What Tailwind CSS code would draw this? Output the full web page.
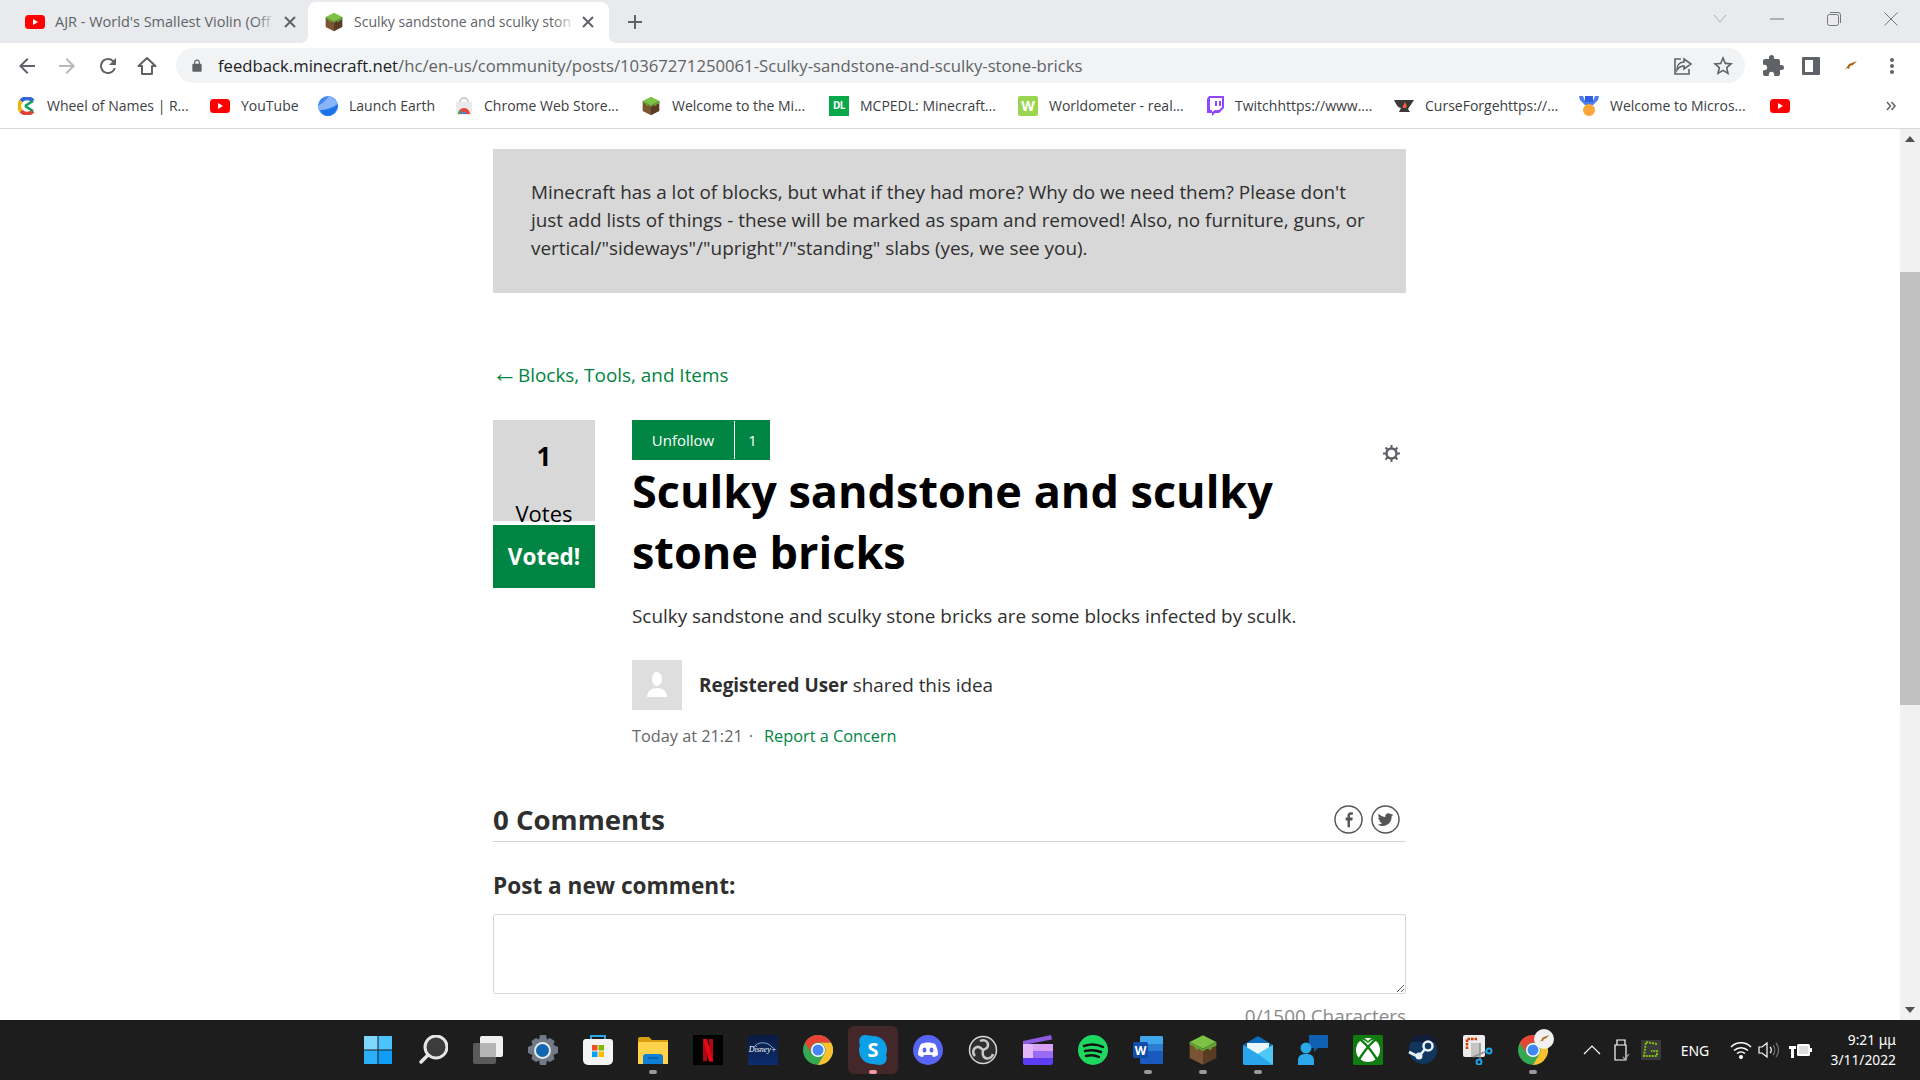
<!DOCTYPE html>
<html lang="en">
<head>
<meta charset="UTF-8">
<meta name="viewport" content="width=device-width, initial-scale=1.0">
<title>Sculky sandstone and sculky stone bricks</title>
<script src="https://cdn.jsdelivr.net/npm/@tailwindcss/browser@4"></script>
</head>
<body class="h-screen w-screen overflow-hidden bg-white flex flex-col font-['Open_Sans',sans-serif] text-[#2f2f2f]">

<!-- shared icons -->
<svg class="hidden">
  <symbol id="yt" viewBox="0 0 20 14"><rect width="20" height="14" rx="3.5" fill="#f00"/><path d="M8 4l5 3-5 3z" fill="#fff"/></symbol>
  <symbol id="grass" viewBox="0 0 24 24"><path d="M12 1l10 5-10 5L2 6z" fill="#7cc344"/><path d="M2 6l10 5v12L2 18z" fill="#7a5433"/><path d="M22 6l-10 5v12l10-5z" fill="#5a3c24"/><path d="M2 6l10 5 10-5v3l-3 1-1 2-3-1-3 2-3-2-2 1-2-3-3-1z" fill="#62a336"/></symbol>
  <symbol id="chrome" viewBox="0 0 24 24"><circle cx="12" cy="12" r="12" fill="#34a853"/><path d="M12 6h10.4A12 12 0 0 1 12 24l5.2-9A6 6 0 0 0 12 6z" fill="#fbc02d"/><path d="M12 0a12 12 0 0 1 10.4 6H12a6 6 0 0 0-5.2 9L1.6 6A12 12 0 0 1 12 0z" fill="#ea4335"/><circle cx="12" cy="12" r="5.6" fill="#fff"/><circle cx="12" cy="12" r="4.4" fill="#4285f4"/></symbol>
  <symbol id="gear" viewBox="0 0 30 30"><path d="M12 0h6l1 4.500 3-1.500 4.500 3-1 4 4.500 2v6l-4.500 2 1 4-4.500 3-3-1.500-1 4.500h-6l-1-4.500-3 1.500-4.500-3 1-4L0 18v-6l4.500-2-1-4L8 3l3 1.500z"/></symbol>
</svg>

<!-- tab strip -->
<div class="h-[43px] bg-[#e8eaed] flex items-end pl-4 shrink-0 text-[14px]">
  <div class="relative w-[292px] h-[41px] pb-[2px] flex items-center pl-[9px] pr-[11px] gap-[10px] text-[#5f6368]">
    <svg class="w-5 h-[14px] shrink-0"><use href="#yt"/></svg>
    <span class="flex-1 min-w-0 whitespace-nowrap text-[14.5px]">AJR - World's Smallest Violin (Off</span>
    <span class="absolute right-[32px] top-0 h-full w-5 bg-gradient-to-r from-transparent to-[#e8eaed]"></span>
    <svg class="relative w-[14px] h-[14px] shrink-0" viewBox="0 0 14 14" fill="none" stroke="#5f6368" stroke-width="2"><path d="M2 2l10 10M12 2L2 12"/></svg>
  </div>
  <div class="relative w-[301px] h-[41px] pb-[2px] bg-white rounded-t-lg flex items-center pl-[16px] pr-[14px] gap-[10px] text-[#5f6368]">
    <span class="absolute -left-2 bottom-0 w-2 h-2 bg-[radial-gradient(circle_at_0_0,transparent_8px,white_8px)]"></span>
    <span class="absolute -right-2 bottom-0 w-2 h-2 bg-[radial-gradient(circle_at_100%_0,transparent_8px,white_8px)]"></span>
    <svg class="w-5 h-5 shrink-0"><use href="#grass"/></svg>
    <span class="flex-1 min-w-0 whitespace-nowrap">Sculky sandstone and sculky ston</span>
    <span class="absolute right-[32px] top-0 h-full w-6 bg-gradient-to-r from-transparent to-white"></span>
    <svg class="relative w-[14px] h-[14px] shrink-0" viewBox="0 0 14 14" fill="none" stroke="#5f6368" stroke-width="2"><path d="M2 2l10 10M12 2L2 12"/></svg>
  </div>
  <div class="w-[52px] h-[41px] pb-[2px] flex items-center justify-center">
    <svg class="w-4 h-4" viewBox="0 0 16 16" fill="none" stroke="#5f6368" stroke-width="2"><path d="M8 1v14M1 8h14"/></svg>
  </div>
  <div class="flex-1"></div>
  <!-- window controls -->
  <div class="h-[38px] self-start flex items-center pr-[22px] gap-[43px]">
    <svg class="w-[14px] h-[10px]" viewBox="0 0 14 10" fill="none" stroke="#a9acb1"><path d="M1 1l6 7 6-7"/></svg>
    <svg class="w-[14px] h-[2px]" viewBox="0 0 14 2" fill="none" stroke="#777"><path d="M0 1h14"/></svg>
    <svg class="w-[14px] h-[14px]" viewBox="0 0 14 14" fill="none" stroke="#777"><rect x=".5" y="2.500" width="11" height="11" rx="2"/><path d="M3 .5h8a2.500 2.500 0 0 1 2.500 2.500v8"/></svg>
    <svg class="w-[14px] h-[14px]" viewBox="0 0 14 14" fill="none" stroke="#777"><path d="M.5.5l13 13M13.500.5l-13 13"/></svg>
  </div>
</div>

<!-- address bar -->
<div class="h-[45px] bg-white flex items-center shrink-0 pl-[15px]">
  <svg class="w-6 h-6 fill-[#5f6368] mr-[16px]" viewBox="0 0 24 24"><path d="M20 11H7.830l5.590-5.590L12 4l-8 8 8 8 1.410-1.410L7.830 13H20z"/></svg>
  <svg class="w-6 h-6 fill-[#b6b8bb] mr-[17px] rotate-180" viewBox="0 0 24 24"><path d="M20 11H7.830l5.590-5.590L12 4l-8 8 8 8 1.410-1.410L7.830 13H20z"/></svg>
  <svg class="w-6 h-6 fill-[#5f6368] mr-[15px]" viewBox="0 0 24 24"><path d="M17.650 6.350A7.958 7.958 0 0 0 12 4c-4.420 0-7.990 3.580-7.990 8s3.570 8 7.990 8c3.730 0 6.840-2.550 7.730-6h-2.080A5.990 5.990 0 0 1 12 18c-3.310 0-6-2.690-6-6s2.690-6 6-6c1.660 0 3.140.69 4.220 1.780L13 11h7V4l-2.350 2.350z"/></svg>
  <svg class="w-6 h-6 mr-[17px]" viewBox="0 0 24 24" fill="none" stroke="#5f6368" stroke-width="2" stroke-linejoin="round"><path d="M12 4l-8.500 8H7v8h10v-8h3.500z"/></svg>
  <div class="w-[1569px] h-[35px] rounded-full bg-[#f1f3f4] flex items-center pl-[14px] pr-[10px] text-[16.7px] whitespace-nowrap">
    <svg class="w-[14px] h-[14px] fill-[#5f6368] mr-[14px]" viewBox="0 0 24 24"><path d="M18 8h-1V6c0-2.760-2.240-5-5-5S7 3.240 7 6v2H6c-1.100 0-2 .9-2 2v10c0 1.100.9 2 2 2h12c1.100 0 2-.9 2-2V10c0-1.100-.9-2-2-2zM9 6c0-1.660 1.340-3 3-3s3 1.340 3 3v2H9V6z"/></svg>
    <span class="text-[#202124]">feedback.minecraft.net</span><span class="text-[#5f6368]">/hc/en-us/community/posts/10367271250061-Sculky-sandstone-and-sculky-stone-bricks</span>
    <div class="flex-1"></div>
    <svg class="w-[20px] h-[20px] mr-[18px]" viewBox="0 0 20 20" fill="none" stroke="#5f6368" stroke-width="1.600"><path d="M8 3H2v15h14v-5"/><path d="M11 3l7 5-7 5v-3c-3 0-5 1-7 4 0-5 3-8 7-8z"/></svg>
    <svg class="w-6 h-6 fill-[#5f6368]" viewBox="0 0 24 24"><path d="M22 9.240l-7.190-.62L12 2 9.190 8.630 2 9.240l5.460 4.730L5.820 21 12 17.270 18.180 21l-1.630-7.030L22 9.240zM12 15.400l-3.760 2.270 1-4.280-3.320-2.880 4.380-.38L12 6.100l1.710 4.040 4.380.38-3.320 2.880 1 4.280L12 15.400z"/></svg>
  </div>
  <svg class="w-6 h-6 fill-[#5f6368] ml-[16px]" viewBox="0 0 24 24"><path d="M20.500 11H19V7c0-1.100-.9-2-2-2h-4V3.500a2.500 2.500 0 0 0-5 0V5H4c-1.100 0-1.990.9-1.990 2v3.800H3.500c1.490 0 2.700 1.210 2.700 2.700s-1.210 2.700-2.700 2.700H2V20c0 1.100.9 2 2 2h3.800v-1.500c0-1.490 1.210-2.700 2.700-2.700s2.700 1.210 2.700 2.700V22H17c1.100 0 2-.9 2-2v-4h1.500a2.500 2.500 0 0 0 0-5z"/></svg>
  <svg class="w-[18px] h-[18px] ml-[17px]" viewBox="0 0 18 18"><rect width="18" height="18" rx="1" fill="#5f6368"/><rect x="3" y="3" width="8" height="12" fill="#fff"/></svg>
  <svg class="w-[14px] h-[10px] ml-[24px]" viewBox="0 0 14 10"><path d="M0 9l3-3 2-3 8-3-4 4-3 1-1 3-2-1z" fill="#a8660f"/></svg>
  <svg class="w-1 h-[16px] ml-[32px]" viewBox="0 0 4 16" fill="#5f6368"><circle cx="2" cy="2" r="2"/><circle cx="2" cy="8" r="2"/><circle cx="2" cy="14" r="2"/></svg>
</div>

<!-- bookmarks -->
<div class="h-[41px] pb-[5px] bg-white border-b border-[#d9dadc] flex items-center shrink-0 pl-[18px] text-[14px] text-[#3c4043] whitespace-nowrap">
  <div class="w-[192px] flex items-center gap-[11px]">
    <svg class="w-[18px] h-[18px]" viewBox="0 0 18 18" fill="none" stroke-width="4"><path d="M15 4A8 8 0 0 0 3 4" stroke="#3367d6"/><path d="M3 4a8 8 0 0 0 0 10" stroke="#f4b400"/><path d="M3 14a8 8 0 0 0 12 0" stroke="#db4437"/><path d="M7 9l8-5M7 9l8 5" stroke="#0f9d58" stroke-width="2.500"/></svg>
    <span>Wheel of Names | R...</span>
  </div>
  <div class="w-[108px] flex items-center gap-[11px]">
    <svg class="w-5 h-[14px]"><use href="#yt"/></svg><span>YouTube</span>
  </div>
  <div class="w-[137px] flex items-center gap-[11px]">
    <svg class="w-5 h-5" viewBox="0 0 20 20"><circle cx="10" cy="10" r="10" fill="#4285f4"/><path d="M0 10c5-3 8-6 11-10 5 2 9 6 9 10 0 5-4 10-10 10S0 15 0 10z" fill="#8ab4f8"/><path d="M2 14c6 0 12-2 18-6 0 7-5 12-10 12-4 0-7-3-8-6z" fill="#1a73e8"/></svg>
    <span>Launch Earth</span>
  </div>
  <div class="w-[186px] flex items-center gap-[11px]">
    <svg class="w-[18px] h-[18px]" viewBox="0 0 18 18"><path d="M1 5h16v13H1z" fill="#e8eaed"/><path d="M5 5a4 4 0 0 1 8 0" fill="none" stroke="#bdc1c6" stroke-width="1.500"/><path d="M3 17a6 6 0 0 1 12 0z" fill="#ea4335"/><path d="M6.500 17a2.500 2.500 0 0 1 5 0z" fill="#4285f4"/><path d="M3 17h2.500l1-3-2-1z" fill="#34a853"/></svg>
    <span>Chrome Web Store...</span>
  </div>
  <div class="w-[188px] flex items-center gap-[11px]">
    <svg class="w-5 h-5"><use href="#grass"/></svg><span>Welcome to the Mi...</span>
  </div>
  <div class="w-[189px] flex items-center gap-[11px]">
    <div class="w-5 h-5 bg-[#0ba84a] flex items-center justify-center text-white text-[10px] font-bold tracking-tighter">DL</div><span>MCPEDL: Minecraft...</span>
  </div>
  <div class="w-[188px] flex items-center gap-[11px]">
    <div class="w-5 h-5 bg-[#9bd44e] rounded-[2px] flex items-center justify-center text-white text-[14px] font-bold">W</div><span>Worldometer - real...</span>
  </div>
  <div class="w-[188px] flex items-center gap-[11px]">
    <svg class="w-[18px] h-5" viewBox="0 0 18 20"><path d="M3 0h15v12l-5 5H9l-3 3v-3H1V3z" fill="#9146ff"/><path d="M4 2h12v9l-3 3H9l-3 2v-2H4z" fill="#fff"/><path d="M9 5h2v5H9zM13 5h2v5h-2z" fill="#9146ff"/></svg>
    <span>Twitchhttps://www....</span>
  </div>
  <div class="w-[185px] flex items-center gap-[11px]">
    <svg class="w-5 h-[14px]" viewBox="0 0 20 14"><path d="M0 1h20l-4 6-2 3 2 3H5l2-4C4 9 2 5 0 1z" fill="#3a3a3a"/><path d="M9 9c-1-3 2-3 1-6 3 2 3 4 2 6z" fill="#f16436"/></svg>
    <span>CurseForgehttps://...</span>
  </div>
  <div class="w-[191px] flex items-center gap-[11px]">
    <svg class="w-5 h-5" viewBox="0 0 20 20"><path d="M0 0h4l2 5h8l2-5h4l-1 4-5 5H6L1 4z" fill="#4c7df0"/><path d="M6 0h8v6H6z" fill="#2f5fe0"/><circle cx="10" cy="14" r="6" fill="#f9a63a"/></svg>
    <span>Welcome to Micros...</span>
  </div>
  <svg class="w-5 h-[14px]"><use href="#yt"/></svg>
  <div class="flex-1"></div>
  <svg class="w-[10px] h-[10px] mr-[24px]" viewBox="0 0 10 10" fill="none" stroke="#5f6368" stroke-width="1.500"><path d="M1 1l3.500 4L1 9M5.500 1L9 5 5.500 9"/></svg>
</div>

<!-- page -->
<div class="flex-1 min-h-0 flex">
  <main class="flex-1 min-w-0 overflow-hidden pl-[493px] pt-[20px]">
    <div class="w-[913px]">
      <div class="bg-[#d8d8d8] pl-[38px] pr-[28px] py-[29px] text-[18.9px] leading-[28px] h-[144px]">
        Minecraft has a lot of blocks, but what if they had more? Why do we need them? Please don't just add lists of things - these will be marked as spam and removed! Also, no furniture, guns, or vertical/"sideways"/"upright"/"standing" slabs (yes, we see you).
      </div>

      <a href="#" class="block mt-[67px] h-[26px] text-[18.9px] leading-[26px] text-[#008542]"><span class="font-['Liberation_Sans',sans-serif] text-[26px] leading-none -ml-[1px]">←</span>Blocks, Tools, and Items</a>

      <div class="flex mt-[34px] relative">
        <!-- vote column -->
        <div class="w-[102px] shrink-0 mr-[37px]">
          <div class="h-[101px] bg-[#d8d8d8] flex flex-col items-center text-black">
            <span class="font-bold text-[26px] leading-[36px] mt-[18px]">1</span>
            <span class="text-[22px] leading-[30px] mt-[24px]">Votes</span>
          </div>
          <button class="mt-1 w-full h-[63px] bg-[#008542] text-white font-bold text-[22.5px]">Voted!</button>
        </div>

        <!-- post -->
        <div class="flex-1 min-w-0">
          <div class="inline-flex h-10 bg-[#008542] text-white text-[15px] items-center">
            <span class="w-[102px] text-center">Unfollow</span>
            <span class="w-[36px] h-[38px] border-l border-white flex items-center justify-center">1</span>
          </div>
          <h1 class="font-bold text-[45px] leading-[61px] text-black">Sculky sandstone and sculky stone bricks</h1>
          <p class="text-[18.9px] leading-[26px] mt-[21px]">Sculky sandstone and sculky stone bricks are some blocks infected by sculk.</p>
          <div class="flex items-center mt-[31px]">
            <div class="w-[50px] h-[50px] bg-[#dedede] flex items-center justify-center">
              <svg class="w-[22px] h-[26px] fill-white" viewBox="0 0 22 26"><ellipse cx="11" cy="7" rx="5" ry="7"/><path d="M1 25c0-6 5-9 10-9s10 3 10 9z"/></svg>
            </div>
            <p class="ml-[17px] text-[18.9px]"><span class="font-bold">Registered User</span> shared this idea</p>
          </div>
          <p class="mt-[15px] text-[16.3px] leading-[22px] text-[#666]">Today at 21:21<span class="ml-[6px]">·</span><a href="#" class="ml-[11px] text-[#008542]">Report a Concern</a></p>
        </div>

        <svg class="absolute right-[6px] top-[25px] w-[17px] h-[17px]" viewBox="0 0 17 17" fill="none" stroke="#5b5f66"><circle cx="8.500" cy="8.500" r="5" stroke-width="2.400"/><path d="M8.500 0v3M8.500 14v3M0 8.500h3M14 8.500h3M2.500 2.500l2 2M12.500 12.500l2 2M14.500 2.500l-2 2M4.500 12.500l-2 2" stroke-width="2"/></svg>
      </div>

      <!-- comments -->
      <div class="mt-[51px] flex items-center justify-between border-b border-[#d4d4d4] h-[44px] pr-[6px]">
        <h2 class="font-bold text-[27.6px]">0 Comments</h2>
        <div class="flex gap-[8px]">
          <svg class="w-[29px] h-[29px]" viewBox="0 0 30 30" fill="none" stroke="#555" stroke-width="1.500"><circle cx="15" cy="15" r="14"/><path d="M16.500 23v-7h2.500l.4-3h-2.900v-1.500c0-1 .3-1.500 1.500-1.500h1.500V7.500h-2c-2.500 0-3.500 1.400-3.500 3.500v2h-2v3h2v7z" fill="#555" stroke="none"/></svg>
          <svg class="w-[29px] h-[29px]" viewBox="0 0 30 30" fill="none" stroke="#555" stroke-width="1.500"><circle cx="15" cy="15" r="14"/><path d="M23 10c-.6.3-1.200.4-1.900.5.700-.4 1.200-1 1.400-1.800-.6.4-1.300.6-2.100.8a3.300 3.300 0 0 0-5.600 3C12 12.400 9.600 11.100 8 9.100c-.9 1.500-.4 3.400 1 4.400-.5 0-1-.2-1.500-.4 0 1.600 1.100 2.900 2.600 3.200-.5.100-1 .2-1.500.1.400 1.300 1.600 2.200 3.100 2.300A6.600 6.600 0 0 1 7 20.100a9.300 9.300 0 0 0 14.300-8.300c.7-.5 1.300-1.100 1.700-1.800z" fill="#555" stroke="none"/></svg>
        </div>
      </div>

      <h3 class="mt-[29px] font-bold text-[22.6px] leading-[30px]">Post a new comment:</h3>
      <textarea class="block mt-[13px] w-full h-[80px] border border-[#d8d8d8] rounded-[2px] resize-y outline-none"></textarea>
      <p class="mt-[9px] text-right text-[18.9px] leading-[26px] text-[#8a8a8a]">0/1500 Characters</p>
    </div>
  </main>

  <!-- scrollbar -->
  <div class="w-5 shrink-0 bg-[#f1f1f1] flex flex-col items-center">
    <div class="h-[20px] flex items-center justify-center"><svg class="w-[10px] h-[6px] fill-[#505050]" viewBox="0 0 10 6"><path d="M5 0l5 6H0z"/></svg></div>
    <div class="w-full h-[433px] mt-[123px] bg-[#c1c1c1]"></div>
    <div class="flex-1"></div>
    <div class="h-[20px] flex items-center justify-center"><svg class="w-[10px] h-[6px] fill-[#505050]" viewBox="0 0 10 6"><path d="M5 6l5-6H0z"/></svg></div>
  </div>
</div>

<!-- taskbar -->
<div class="h-[60px] shrink-0 bg-[#1d1d1d] flex items-stretch pl-[350px] text-white">
  <!-- start -->
  <div class="w-[55px] flex items-center justify-center">
    <svg class="w-[30px] h-[30px]" viewBox="0 0 30 30"><path d="M1 1h13.500v13.500H1z" fill="#7fd6fd"/><path d="M15.500 1H29v13.500H15.500z" fill="#4cc2ff"/><path d="M1 15.500h13.500V29H1z" fill="#2bb0f7"/><path d="M15.500 15.500H29V29H15.500z" fill="#0f9ef5"/></svg>
  </div>
  <!-- search -->
  <div class="w-[55px] flex items-center justify-center">
    <svg class="w-[30px] h-[30px]" viewBox="0 0 30 30" fill="none"><circle cx="18" cy="12" r="11" fill="#3c3c3c" stroke="#e6e6e6" stroke-width="3"/><path d="M10 20l-7 7" stroke="#e6e6e6" stroke-width="3.500" stroke-linecap="round"/></svg>
  </div>
  <!-- task view -->
  <div class="w-[55px] flex items-center justify-center">
    <svg class="w-[30px] h-[30px]" viewBox="0 0 30 30"><rect x="0" y="8" width="23" height="21" rx="2" fill="#5a5a5a"/><rect x="7" y="1" width="23" height="21" rx="2" fill="#f0f0f0"/><rect x="7" y="8" width="16" height="14" rx="1" fill="#b5b5b5"/></svg>
  </div>
  <!-- settings -->
  <div class="w-[55px] flex items-center justify-center">
    <svg class="w-[30px] h-[30px] fill-[#6f7a86]"><use href="#gear"/></svg>
    <span class="absolute w-[17px] h-[17px] rounded-full bg-[#1167b1] border-2 border-[#e6e6e6]"></span>
  </div>
  <!-- store -->
  <div class="w-[55px] flex items-center justify-center">
    <svg class="w-[30px] h-[30px]" viewBox="0 0 30 30"><path d="M8 5V1h14v4" fill="none" stroke="#2aa5e8" stroke-width="2"/><path d="M0 7a3 3 0 0 1 3-3h24a3 3 0 0 1 3 3v18a5 5 0 0 1-5 5H5a5 5 0 0 1-5-5z" fill="#f4f4f4"/><path d="M9 10h5.500v5.500H9z" fill="#f25022"/><path d="M15.500 10H21v5.500h-5.500z" fill="#7fba00"/><path d="M9 16.500h5.500V22H9z" fill="#00a4ef"/><path d="M15.500 16.500H21V22h-5.500z" fill="#ffb900"/></svg>
  </div>
  <!-- explorer -->
  <div class="relative w-[55px] flex items-center justify-center">
    <svg class="w-[30px] h-[27px]" viewBox="0 0 30 27"><path d="M0 2a2 2 0 0 1 2-2h9l3 3h16v20H0z" fill="#d89c0e"/><path d="M0 5h30v22H0z" fill="#ffd24c"/><path d="M5 20a3 3 0 0 1 3-3h14a3 3 0 0 1 3 3v7H5z" fill="#0f7fd6"/><path d="M10 21h10" stroke="#0a5a9c" stroke-width="1.500"/></svg>
    <span class="absolute bottom-[6px] w-[8px] h-[4px] rounded-full bg-[#9a9a9a]"></span>
  </div>
  <!-- netflix -->
  <div class="w-[55px] flex items-center justify-center">
    <svg class="w-[30px] h-[30px]" viewBox="0 0 30 30"><rect width="30" height="30" fill="#000"/><path d="M10 4h4v22l-4 .5zM16 4h4v22.500l-4-.5z" fill="#b20710"/><path d="M10 4h4l6 22.500h-4z" fill="#e50914"/></svg>
  </div>
  <!-- disney -->
  <div class="w-[55px] flex items-center justify-center">
    <div class="relative w-[30px] h-[30px] bg-gradient-to-b from-[#0a1a40] to-[#0b2d6e] flex items-center justify-center text-[8px] text-white font-['Liberation_Serif',serif] italic whitespace-nowrap">
      Disney+
      <svg class="absolute top-[6px] left-[4px] w-[22px] h-[8px]" viewBox="0 0 22 8" fill="none" stroke="#8fd0f5" stroke-width=".8"><path d="M1 7c5-7 14-7 20 0"/></svg>
    </div>
  </div>
  <!-- chrome -->
  <div class="w-[55px] flex items-center justify-center">
    <svg class="w-[30px] h-[30px]"><use href="#chrome"/></svg>
  </div>
  <!-- skype -->
  <div class="relative w-[55px] flex items-center justify-center">
    <div class="absolute top-[6px] w-[50px] h-[48px] rounded-md bg-[#442728]"></div>
    <svg class="relative w-[30px] h-[30px]" viewBox="0 0 30 30"><path d="M7 0c3 0 5 1 8 1 8 0 14 6 14 14 0 2-.5 3-1 5 2 4 0 10-7 10-2 0-4-1-6-1C7 29 1 23 1 15c0-2 .5-3 1-5C0 5 2 0 7 0z" fill="#0ea0e6"/><text x="15" y="22" text-anchor="middle" font-size="20" font-weight="700" fill="#fff" font-family="Open Sans">S</text></svg>
    <span class="absolute bottom-[6px] w-[8px] h-[4px] rounded-full bg-[#f59aa5]"></span>
  </div>
  <!-- discord -->
  <div class="w-[55px] flex items-center justify-center">
    <svg class="w-[30px] h-[30px]" viewBox="0 0 30 30"><circle cx="15" cy="15" r="15" fill="#5865f2"/><path d="M8 9c4-2 10-2 14 0 2 3 3 7 3 11-2 1-3 2-5 2l-1-2H11l-1 2c-2 0-3-1-5-2 0-4 1-8 3-11z" fill="#fff"/><ellipse cx="11.500" cy="15" rx="2" ry="2.500" fill="#5865f2"/><ellipse cx="18.500" cy="15" rx="2" ry="2.500" fill="#5865f2"/></svg>
  </div>
  <!-- obs -->
  <div class="w-[55px] flex items-center justify-center">
    <svg class="w-[30px] h-[30px]" viewBox="0 0 30 30" fill="none"><circle cx="15" cy="15" r="13.500" fill="#302e31" stroke="#d6d6d6" stroke-width="1.500"/><path d="M12 6c4-2 8 0 8 4 0 2-2 4-5 5M25 19c-1 4-6 6-9 3-1.500-1.500-1.500-4-1-7M7 21c-3-3-2-8 2-9 2-.5 4 .5 6 3" stroke="#c8c8c8" stroke-width="2.500"/></svg>
  </div>
  <!-- clipchamp -->
  <div class="w-[55px] flex items-center justify-center">
    <svg class="w-[30px] h-[30px]" viewBox="0 0 30 30"><path d="M0 6l28-6 1 4.500L0 10z" fill="#8e5be0"/><rect y="9" width="30" height="21" rx="2" fill="#5e3cf2"/><rect y="9" width="30" height="7" fill="#d9a0f7"/><rect y="16" width="30" height="7" fill="#9a6cf5"/><rect y="9" width="10" height="14" fill="#e5b5fa"/></svg>
  </div>
  <!-- spotify -->
  <div class="w-[55px] flex items-center justify-center">
    <svg class="w-[30px] h-[30px]" viewBox="0 0 30 30" fill="none"><circle cx="15" cy="15" r="15" fill="#1ed760"/><path d="M6 11c6-2 13-2 19 1M7 16c5-1 11-1 16 1M8 21c4-1 9-1 13 1" stroke="#111" stroke-width="2.500" stroke-linecap="round"/></svg>
  </div>
  <!-- word -->
  <div class="relative w-[55px] flex items-center justify-center">
    <svg class="w-[30px] h-[28px]" viewBox="0 0 30 28"><rect x="7" y="0" width="23" height="28" rx="1.500" fill="#185abd"/><path d="M7 1.500a1.500 1.500 0 0 1 1.500-1.500h20a1.500 1.500 0 0 1 1.500 1.500V8H7z" fill="#41a5ee"/><path d="M7 8h23v7H7z" fill="#2b7cd3"/><rect x="0" y="6" width="15" height="16" rx="1.500" fill="#0f4ea8"/><text x="7.500" y="19" text-anchor="middle" font-size="12" font-weight="700" fill="#fff" font-family="Open Sans">W</text></svg>
    <span class="absolute bottom-[6px] w-[8px] h-[4px] rounded-full bg-[#9a9a9a]"></span>
  </div>
  <!-- minecraft -->
  <div class="relative w-[55px] flex items-center justify-center">
    <svg class="w-[32px] h-[32px]"><use href="#grass"/></svg>
    <span class="absolute bottom-[6px] w-[8px] h-[4px] rounded-full bg-[#9a9a9a]"></span>
  </div>
  <!-- mail -->
  <div class="relative w-[55px] flex items-center justify-center">
    <svg class="w-[30px] h-[29px]" viewBox="0 0 30 29"><path d="M0 9L15 0l15 9v18a2 2 0 0 1-2 2H2a2 2 0 0 1-2-2z" fill="#0f6cbd"/><path d="M4 7h22v7l-11 6-11-6z" fill="#eaf4fb"/><path d="M0 9l15 9 15-9v18a2 2 0 0 1-2 2H2a2 2 0 0 1-2-2z" fill="#28a8ea"/><path d="M15 18l15 11V27 9z" fill="#50c8f5"/></svg>
    <span class="absolute bottom-[6px] w-[8px] h-[4px] rounded-full bg-[#9a9a9a]"></span>
  </div>
  <!-- feedback -->
  <div class="w-[55px] flex items-center justify-center">
    <svg class="w-[30px] h-[30px]" viewBox="0 0 30 30"><path d="M11 0h18a1 1 0 0 1 1 1v11a1 1 0 0 1-1 1H20l-4 4v-4h-5z" fill="#0f5fb5"/><circle cx="8" cy="13" r="5.500" fill="#29a9ea"/><path d="M0 30v-5a6 6 0 0 1 6-6h4a6 6 0 0 1 6 6v5z" fill="#29a9ea"/></svg>
  </div>
  <!-- xbox -->
  <div class="w-[55px] flex items-center justify-center">
    <svg class="w-[30px] h-[30px]" viewBox="0 0 30 30" fill="none"><rect width="30" height="30" rx="1.500" fill="#107c10"/><circle cx="15" cy="15" r="12" fill="#fff"/><path d="M6 4c4 2 12 11 19 22M24 4c-4 2-12 11-19 22" stroke="#107c10" stroke-width="2.500"/><path d="M8 3c3 1 5 2 7 4 2-2 4-3 7-4" stroke="#107c10" stroke-width="1.500"/></svg>
  </div>
  <!-- steam -->
  <div class="w-[55px] flex items-center justify-center">
    <svg class="w-[30px] h-[30px]" viewBox="0 0 30 30" fill="none"><circle cx="15" cy="15" r="14" fill="#10355f"/><path d="M2 7a14 14 0 0 1 26 0z" fill="#111d3a"/><path d="M1 17l10 5" stroke="#e8f2fa" stroke-width="3"/><circle cx="11" cy="21" r="3.500" fill="#e8f2fa"/><circle cx="20" cy="11" r="4.500" stroke="#e8f2fa" stroke-width="2.500"/><path d="M13 19l4-5" stroke="#e8f2fa" stroke-width="2.500"/></svg>
  </div>
  <!-- snipping tool -->
  <div class="w-[55px] flex items-center justify-center">
    <svg class="w-[30px] h-[30px]" viewBox="0 0 30 30" fill="none"><rect width="22" height="22" rx="2" fill="#ececec"/><path d="M4 14V4h10" stroke="#d83b01" stroke-width="2.500" stroke-dasharray="2.500 1"/><path d="M8 8h9v14H8z" fill="#c4c4c4"/><path d="M17 8v14M24 16l-14 6M17 22l0 2" stroke="#8f8f8f" stroke-width="1.500"/><circle cx="26" cy="16" r="2.500" stroke="#1ea1e8" stroke-width="2"/><circle cx="16" cy="27" r="2.500" stroke="#1ea1e8" stroke-width="2"/></svg>
  </div>
  <!-- chrome with profile badge -->
  <div class="relative w-[55px] flex items-center justify-center">
    <svg class="w-[30px] h-[30px]"><use href="#chrome"/></svg>
    <span class="absolute top-[9px] right-[6px] w-[20px] h-[20px] rounded-full bg-[#f0f0f0] flex items-center justify-center"><svg class="w-[11px] h-[8px]" viewBox="0 0 14 10"><path d="M0 9l3-3 2-3 8-3-4 4-3 1-1 3-2-1z" fill="#a8660f"/></svg></span>
    <span class="absolute bottom-[6px] w-[8px] h-[4px] rounded-full bg-[#9a9a9a]"></span>
  </div>

  <!-- tray -->
  <div class="w-[17px]"></div>
  <div class="w-[30px] flex items-center justify-center">
    <svg class="w-[18px] h-[10px]" viewBox="0 0 18 10" fill="none" stroke="#fff" stroke-width="1.200"><path d="M1 9l8-8 8 8"/></svg>
  </div>
  <div class="w-[30px] flex items-center justify-center">
    <svg class="w-[16px] h-[22px]" viewBox="0 0 16 22" fill="none" stroke="#fff" stroke-width="1.200"><path d="M3 1h8v5H3zM1 6h11v15H1z"/><path d="M9 18l2 2 4-5" stroke="#aaa"/></svg>
  </div>
  <div class="w-[28px] flex items-center justify-center">
    <svg class="w-5 h-5" viewBox="0 0 20 20" fill="none"><rect width="20" height="20" fill="#3a3a3a"/><path d="M16 4L5 2l-2 14h13v-5H10" stroke="#7dc30f" stroke-width="2" stroke-dasharray="2 1"/></svg>
  </div>
  <div class="w-[60px] flex items-center justify-center text-[14px] font-['Noto_Sans',sans-serif]">ENG</div>
  <div class="w-[32px] flex items-center justify-center">
    <svg class="w-[22px] h-[18px]" viewBox="0 0 22 18" fill="none" stroke="#fff" stroke-width="1.500"><path d="M1 6a14 14 0 0 1 20 0M4 9.500a10 10 0 0 1 14 0M7 12.500a6 6 0 0 1 8 0"/><circle cx="11" cy="16" r="1.300" fill="#fff"/></svg>
  </div>
  <div class="w-[24px] flex items-center justify-center">
    <svg class="w-[22px] h-[18px]" viewBox="0 0 22 18" fill="none" stroke="#fff" stroke-width="1.200"><path d="M1 6h3l5-4v14l-5-4H1z"/><path d="M12 6a4 4 0 0 1 0 6"/><path d="M15 4a8 8 0 0 1 0 10M18 2a11 11 0 0 1 0 14" stroke="#777"/></svg>
  </div>
  <div class="w-[32px] ml-[4px] flex items-center justify-center">
    <svg class="w-[24px] h-[16px]" viewBox="0 0 24 16"><path d="M2 0v4M5 0v4M0 4h7v3H5v9H2V7H0z" fill="#fff"/><rect x="8" y="2" width="13" height="12" rx="1.500" fill="#fff"/><rect x="21" y="6" width="2" height="4" fill="#fff"/><rect x="10" y="4" width="9" height="8" fill="#ddd"/></svg>
  </div>
  <div class="flex-1 flex flex-col items-end justify-center pr-[24px] text-[13.8px] leading-[20px] font-['Noto_Sans',sans-serif]">
    <span>9:21 μμ</span>
    <span>3/11/2022</span>
  </div>
</div>

</body>
</html>
